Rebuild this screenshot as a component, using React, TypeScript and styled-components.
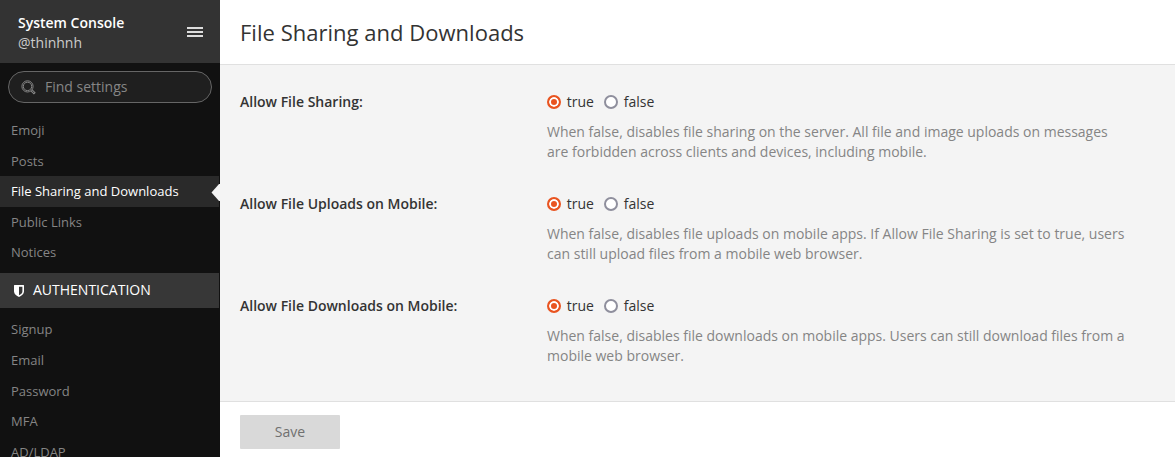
import React from 'react';
import styled, { createGlobalStyle } from 'styled-components';

const GlobalStyle = createGlobalStyle`
  * { box-sizing: border-box; }
  body {
    margin: 0;
    overflow: hidden;
    font-family: 'Open Sans', sans-serif;
    font-size: 14px;
    line-height: 20px;
    color: #333333;
  }
`;

const Console = styled.div`
  display: flex;
  height: 100vh;
  background: #f4f4f4;
`;

const Sidebar = styled.aside`
  display: flex;
  flex-direction: column;
  flex: 0 0 220px;
  height: 100%;
  overflow: hidden;
  background: #111111;
`;

const SidebarHeader = styled.header`
  display: flex;
  flex: none;
  align-items: center;
  justify-content: space-between;
  height: 63px;
  padding: 2px 17px 0 18px;
  background: #333333;
  color: #cccccc;
`;

const ConsoleName = styled.div`
  font-weight: 600;
  color: #ffffff;
`;

const MenuIcon = styled.svg`
  display: block;
  margin-bottom: 2px;
  fill: #dddddd;
`;

const Search = styled.label`
  display: flex;
  flex: none;
  align-items: center;
  gap: 9px;
  height: 32px;
  margin: 8px 8px 12.1px;
  padding: 0 12px;
  border: 1px solid #666666;
  border-radius: 16px;
  background: #1f1f1f;
`;

const SearchInput = styled.input`
  width: 140px;
  height: 20px;
  padding: 0;
  border: 0;
  outline: 0;
  background: transparent;
  font: inherit;
  color: #ffffff;
  &::placeholder { color: #868686; opacity: 1; }
`;

const NavList = styled.ul`
  flex: none;
  width: 219px;
  margin: 0;
  padding: 0;
  list-style: none;
`;

const NavItem = styled.li<{ $active?: boolean }>`
  position: relative;
  padding: 6px 11px;
  font-size: 13px;
  line-height: 18.57px;
  white-space: nowrap;
  color: ${(p) => (p.$active ? '#ffffff' : '#858585')};
  background: ${(p) => (p.$active ? '#2a2a2a' : 'transparent')};
`;

const ActiveArrow = styled.svg`
  position: absolute;
  top: 8px;
  right: -1px;
  fill: #f4f4f4;
`;

const SectionTitle = styled.div`
  display: flex;
  flex: none;
  align-items: center;
  gap: 9px;
  width: 219px;
  height: 35px;
  margin: 5.3px 0 6.25px;
  padding: 0 14px;
  background: #373737;
  color: #ffffff;
`;

const SectionName = styled.span`
  padding-bottom: 2px;
`;

const Main = styled.main`
  display: flex;
  flex: 1;
  flex-direction: column;
  min-width: 0;
`;

const PageHeader = styled.h1`
  flex: none;
  height: 65px;
  margin: 0;
  padding: 0 20px;
  border-bottom: 1px solid #e0e0e0;
  background: #ffffff;
  font-size: 22px;
  font-weight: 400;
  letter-spacing: 0.02px;
  line-height: 64px;
`;

const Settings = styled.form`
  flex: 1;
  padding: 27px 20px 0;
`;

const Setting = styled.div`
  display: grid;
  grid-template-columns: 307px 584px;
  height: 102px;
`;

const SettingLabel = styled.div`
  font-weight: 600;
`;

const Choices = styled.div`
  display: flex;
  gap: 10px;
`;

const Choice = styled.label`
  display: flex;
  align-items: center;
  gap: 5.8px;
`;

const Radio = styled.input`
  display: block;
  appearance: none;
  width: 14px;
  height: 14px;
  margin: 0;
  border: 2px solid #8f8f9d;
  border-radius: 50%;
  background: #ffffff;
  &:checked {
    border-color: #e95420;
    background: #e95420;
    box-shadow: inset 0 0 0 2px #ffffff;
  }
`;

const HelpText = styled.p`
  margin: 10px 0 0;
  color: #858585;
`;

const Footer = styled.footer`
  flex: none;
  height: 56px;
  padding: 13px 20px 0;
  border-top: 1px solid #e0e0e0;
  background: #ffffff;
`;

const SaveButton = styled.button`
  display: block;
  width: 100px;
  height: 34px;
  padding: 0;
  border: 0;
  border-radius: 1px;
  background: #d9d9d9;
  font: inherit;
  color: #707070;
`;

const siteItems = ['Emoji', 'Posts', 'File Sharing and Downloads', 'Public Links', 'Notices'];
const authItems = ['Signup', 'Email', 'Password', 'MFA', 'AD/LDAP'];
const activeItem = 'File Sharing and Downloads';

const settings = [
  {
    id: 'sharing',
    label: 'Allow File Sharing:',
    help: ['When false, disables file sharing on the server. All file and image uploads on messages', 'are forbidden across clients and devices, including mobile.'],
  },
  {
    id: 'uploads',
    label: 'Allow File Uploads on Mobile:',
    help: ['When false, disables file uploads on mobile apps. If Allow File Sharing is set to true, users', 'can still upload files from a mobile web browser.'],
  },
  {
    id: 'downloads',
    label: 'Allow File Downloads on Mobile:',
    help: ['When false, disables file downloads on mobile apps. Users can still download files from a', 'mobile web browser.'],
  },
];

function Nav({ items }: { items: string[] }) {
  return (
    <NavList>
      {items.map((item) => (
        <NavItem key={item} $active={item === activeItem}>
          {item}
          {item === activeItem && (
            <ActiveArrow width="9" height="17" viewBox="0 0 9 17">
              <path d="M9 0H8L0.5 8.5L8 17H9Z" />
            </ActiveArrow>
          )}
        </NavItem>
      ))}
    </NavList>
  );
}

export default function App() {
  return (
    <Console>
      <GlobalStyle />
      <Sidebar>
        <SidebarHeader>
          <div>
            <ConsoleName>System Console</ConsoleName>
            <div>@thinhnh</div>
          </div>
          <MenuIcon width="16" height="10" viewBox="0 0 16 10">
            <path d="M0 0h16v2H0zM0 4h16v2H0zM0 8h16v2H0z" />
          </MenuIcon>
        </SidebarHeader>
        <Search>
          <svg width="15" height="15" viewBox="0 0 15 15" fill="none" stroke="#858585">
            <circle cx="6.5" cy="6.4" r="5.6" strokeWidth="1" />
            <circle cx="6.5" cy="6.4" r="4.2" strokeWidth="1" />
            <path d="M9.9 10.8l3 3 1.1-1.1-3.1-3" strokeWidth="1.1" />
          </svg>
          <SearchInput placeholder="Find settings" />
        </Search>
        <Nav items={siteItems} />
        <SectionTitle>
          <svg width="10" height="12" viewBox="0 0 10 12" fill="#ffffff">
            <path fillRule="evenodd" d="M0.5 0h9q.5 0 .5.5V6.5C10 9 7.5 11 5 12C2.5 11 0 9 0 6.5V.5Q0 0 .5 0ZM5 1.7V10.2C6.8 9.3 8.4 8 8.4 6.4V1.7Z" />
          </svg>
          <SectionName>AUTHENTICATION</SectionName>
        </SectionTitle>
        <Nav items={authItems} />
      </Sidebar>
      <Main>
        <PageHeader>File Sharing and Downloads</PageHeader>
        <Settings>
          {settings.map(({ id, label, help }) => (
            <Setting key={id}>
              <SettingLabel>{label}</SettingLabel>
              <div>
                <Choices>
                  <Choice>
                    <Radio type="radio" name={id} defaultChecked />
                    true
                  </Choice>
                  <Choice>
                    <Radio type="radio" name={id} />
                    false
                  </Choice>
                </Choices>
                <HelpText>
                  {help[0]}
                  <br />
                  {help[1]}
                </HelpText>
              </div>
            </Setting>
          ))}
        </Settings>
        <Footer>
          <SaveButton type="button">Save</SaveButton>
        </Footer>
      </Main>
    </Console>
  );
}
